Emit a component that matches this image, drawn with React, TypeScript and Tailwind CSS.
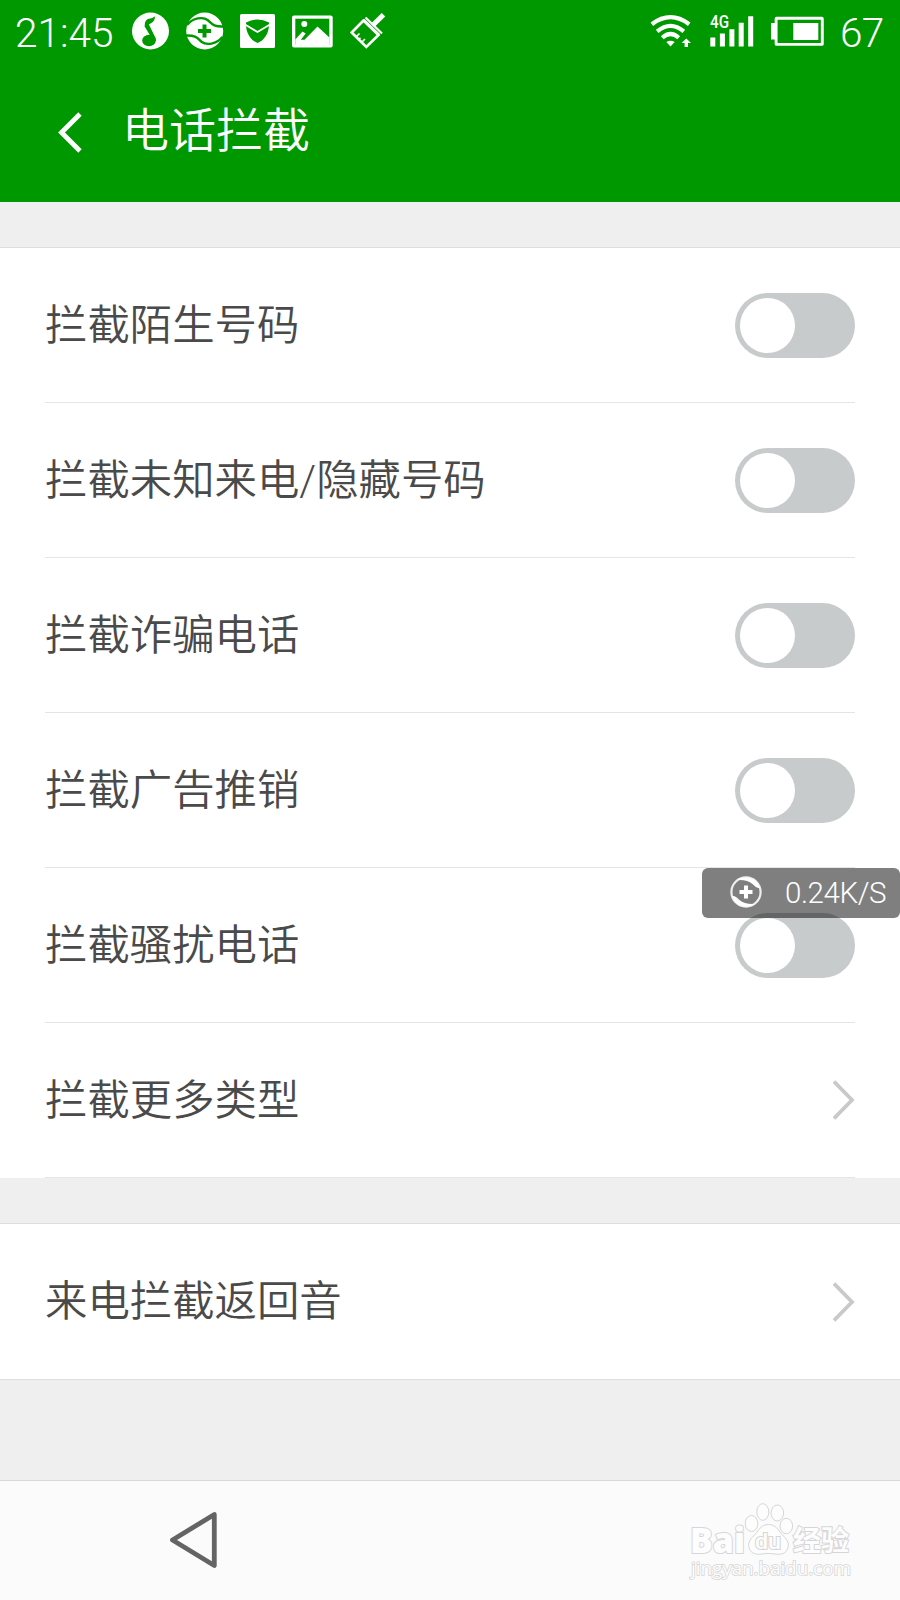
import { useState } from "react";

const switches = [
  "拦截陌生号码",
  "拦截未知来电/隐藏号码",
  "拦截诈骗电话",
  "拦截广告推销",
  "拦截骚扰电话",
];

function StatusBar() {
  return (
    <div className="flex h-[64px] items-start text-white">
      <div className="ml-[15px] mt-[9px] w-[117px] text-[40.5px] leading-[48px] font-light">
        21:45
      </div>
      {/* music */}
      <svg className="mt-[12px]" width="38" height="38" viewBox="0 0 38 38">
        <circle cx="18.5" cy="19" r="18.5" fill="#fff" />
        <g fill="#009800">
          <ellipse cx="17" cy="28.5" rx="6.8" ry="5.8" />
          <path d="M12.8 12.500C13 8.500 15 7 18 6.500C20 6.200 21.500 5.500 22.800 4.300C23.400 8.500 20.500 11 16.800 12.300L23.800 26.500V29H21.500L12.600 14.500Z" />
        </g>
      </svg>
      {/* guard */}
      <svg className="mt-[12px] ml-[16px]" width="38" height="38" viewBox="0 0 38 38">
        <circle cx="18.7" cy="19" r="18.5" fill="#fff" />
        <g fill="none" stroke="#009800" strokeWidth="2.4">
          <path d="M1 13C7 5.500 17 4.500 22 8.300C26 12 28 15 38 14.500" />
          <path d="M36.400 25C30.400 32.500 20.400 33.500 15.400 29.700C11.400 26 9.400 23 -0.600 23.500" />
        </g>
        <path d="M18.500 12.500V25.500M12 19H25" stroke="#009800" strokeWidth="4" />
      </svg>
      {/* mail shield */}
      <svg className="mt-[14px] ml-[16px]" width="35" height="34" viewBox="0 0 35 34">
        <rect width="35" height="34" rx="1.500" fill="#fff" />
        <path d="M6 8.500Q17.500 2.500 29 8.500C29.500 18 25 26 17.500 29C10 26 5.500 18 6 8.500Z" fill="#009800" />
        <path d="M5 10.500L17.500 18L30 10.500" fill="none" stroke="#fff" strokeWidth="1.800" />
      </svg>
      {/* gallery */}
      <svg className="mt-[15px] ml-[17px]" width="41" height="33" viewBox="0 0 41 33">
        <rect y="0.500" width="40.700" height="32" rx="2" fill="#fff" />
        <rect x="3.300" y="3.700" width="34" height="26" fill="#009800" />
        <circle cx="12.300" cy="9" r="3" fill="#fff" />
        <path d="M3.300 24.500L10.500 16.500L13.700 18.500L8.800 24.800H12.500L25.500 11.500L37.400 22.500V30H3.300Z" fill="#fff" />
      </svg>
      {/* cleaner brush */}
      <svg className="mt-[13px] ml-[17px]" width="36" height="37" viewBox="0 0 36 37">
        <g fill="none" stroke="#fff">
          <path d="M13.500 7.500L1.700 19.500L16.300 34L28.500 22Z" strokeWidth="2.600" />
          <path d="M15.500 4.500L32 20.500" strokeWidth="2.200" />
          <path d="M13.500 7L29 22" strokeWidth="3" />
          <path d="M22.500 12.500L33.500 1.800" strokeWidth="5" />
          <path d="M6 24L9.500 20.500M8.800 26.500L10.500 24.800M11.500 29.500L15 26" strokeWidth="1.600" />
        </g>
      </svg>
      <svg className="mt-[14px] ml-auto" width="42" height="34" viewBox="0 0 42 34">
        <g fill="none" stroke="#fff" strokeWidth="4.200">
          <path d="M1.800 10.200Q20.500 -3.800 39.200 10.200" />
          <path d="M7.200 17.300Q20.500 6.300 33.800 17.300" />
          <path d="M12.300 23.800Q20.500 16.300 28.700 23.800" />
        </g>
        <path d="M16.300 28Q20.500 25.500 24.700 28L20.500 32.500Z" fill="#fff" />
        <path d="M36.300 24.500L41 29H38V33H34.600V29H31.600Z" fill="#fff" />
      </svg>
      <svg className="mt-[10px] ml-[18px]" width="44" height="38" viewBox="0 -3 44 38">
        <text x="0" y="14.500" fontSize="19" fontWeight="500" fill="#fff" textLength="19" lengthAdjust="spacingAndGlyphs">
          4G
        </text>
        <path d="M.3 24.500h5v9h-5zM9.900 20.500h5v13h-5zM19.400 16.300h5v17.200h-5zM28.700 9.700h5v23.800h-5zM38.200 3.200h5v30.300h-5z" fill="#fff" />
      </svg>
      <svg className="mt-[16px] ml-[17px]" width="53" height="31" viewBox="0 0 53 31">
        <rect x="5.100" y="2.200" width="46.200" height="26.200" rx="0.500" fill="none" stroke="#fff" strokeWidth="2.900" />
        <path d="M0 7h4v16.500H0zM22.300 7h25v17h-25z" fill="#fff" />
      </svg>
      <div className="mt-[9px] ml-[16px] w-[60px] text-[40.5px] leading-[48px] font-light tracking-[-0.8px]">67</div>
    </div>
  );
}

function Switch() {
  const [on, setOn] = useState(false);
  return (
    <button
      role="switch"
      aria-checked={on}
      onClick={() => setOn(!on)}
      className={
        on
          ? "flex h-[65px] w-[120px] items-center justify-end rounded-full bg-[#009800] px-[5px]"
          : "flex h-[65px] w-[120px] items-center rounded-full bg-[#c7cbcc] px-[5px]"
      }
    >
      <span className="h-[55px] w-[55px] rounded-full bg-white"></span>
    </button>
  );
}

function Arrow() {
  return (
    <svg width="22" height="42" viewBox="0 0 22 42" fill="none" stroke="#c9c9c9" strokeWidth="3.800">
      <path d="M1 2.500L19 21L1 39.500" />
    </svg>
  );
}

function GuardIcon() {
  return (
    <svg className="-mt-[2px]" width="32" height="32" viewBox="0 0 32 32">
      <circle cx="16" cy="16" r="14.600" fill="none" stroke="#eee" strokeWidth="2.200" />
      <path d="M7 4C14 -1 27 1 30 12C26 12 25 10 22.500 8C19 5 14 3.500 7 4Z" fill="#fff" />
      <path d="M25 28C18 33 5 31 2 20C6 20 7 22 9.500 24C13 27 18 28.500 25 28Z" fill="#fff" />
      <path d="M16 9.500V22.500M9.500 16H22.500" stroke="#fff" strokeWidth="4" />
    </svg>
  );
}

function Watermark() {
  return (
    <svg width="240" height="119" viewBox="0 11 240 119">
      <g fill="#fdfdfd" stroke="#d6d6d6" strokeWidth="1">
        <ellipse cx="91.500" cy="53.500" rx="6.300" ry="8" />
        <ellipse cx="102.800" cy="42" rx="6" ry="8.300" />
        <ellipse cx="117.300" cy="43" rx="6.300" ry="8" />
        <ellipse cx="126.300" cy="56" rx="6.300" ry="7.700" />
        <path d="M108.500 54.500C116 54.500 118 60 122 64.500C126 68.500 129.500 72 128 77.500C126.500 83.500 121 85 115 84C110 83.300 106 83.300 102 84C96 85 90.500 83.500 89 77.500C87.500 72 91 68.500 95 64.500C99 60 101 54.500 108.500 54.500Z" />
      </g>
      {/* paint-order keeps the outline outside of the letters */}
      <g fill="#fdfdfd" stroke="#d6d6d6" strokeWidth="2" className="[paint-order:stroke]">
        <text x="30" y="82.500" fontSize="35" fontWeight="800" textLength="55" lengthAdjust="spacingAndGlyphs" className="font-['Open_Sans',sans-serif]">
          Bai
        </text>
        <text x="95" y="79" fontSize="22" fontWeight="500" textLength="26" lengthAdjust="spacingAndGlyphs">
          du
        </text>
        <text x="133" y="81" fontSize="28" fontWeight="700">
          经验
        </text>
        <text x="31" y="104.500" fontSize="19" strokeWidth="1.600" textLength="160" className="font-['Open_Sans',sans-serif]">
          jingyan.baidu.com
        </text>
      </g>
    </svg>
  );
}

export default function App() {
  return (
    <div className="relative flex h-[1600px] w-[900px] flex-col overflow-hidden bg-[#efefef] font-['Roboto','Noto_Sans_CJK_SC',sans-serif] text-[#4a4a4a]">
      <div className="h-[202px] shrink-0 bg-[#009800] text-white">
        <StatusBar />
        <div className="flex h-[137px] items-center pl-[57px]">
          <svg width="25" height="42" viewBox="0 0 25 42" fill="none" stroke="#fff" strokeWidth="4.800">
            <path d="M23 2L4.500 20.500L23 39" />
          </svg>
          <h1 className="-mt-[4px] ml-[40px] text-[47px] leading-[60px] font-[350]">电话拦截</h1>
        </div>
      </div>

      <div className="mt-[45px] border-t border-[#dedede] bg-white px-[45px]">
        {switches.map((name) => (
          <div key={name} className="flex h-[155px] items-center justify-between border-b border-[#e5e5e5]">
            <span className="mt-[2px] text-[42.4px] leading-[56px] font-[350]">{name}</span>
            <Switch />
          </div>
        ))}
        <div className="flex h-[155px] items-center justify-between border-b border-[#e5e5e5]">
          <span className="mt-[2px] text-[42.4px] leading-[56px] font-[350]">拦截更多类型</span>
          <Arrow />
        </div>
      </div>

      <div className="mt-[45px] flex h-[157px] items-center justify-between border-y border-[#dedede] bg-white px-[45px]">
        <span className="text-[42.4px] leading-[56px] font-[350]">来电拦截返回音</span>
        <Arrow />
      </div>

      <div className="mt-auto flex h-[120px] items-start justify-between border-t border-[#d8d8d8] bg-[#fbfbfb]">
        <svg className="mt-[30px] ml-[168px]" width="52" height="60" viewBox="0 0 52 60">
          <path d="M46.300 3.500L4.500 29L46.300 54.500Z" fill="none" stroke="#646464" strokeWidth="4.800" strokeLinejoin="round" />
        </svg>
        <Watermark />
      </div>

      {/* floating network speed */}
      <div className="absolute top-[868px] right-0 flex h-[50px] w-[198px] items-center rounded-[6px] bg-black/50 pl-[28px] text-white">
        <GuardIcon />
        <span className="mt-px ml-[23px] text-[29.5px] leading-none font-light tracking-[-0.4px]">0.24K/S</span>
      </div>
    </div>
  );
}
